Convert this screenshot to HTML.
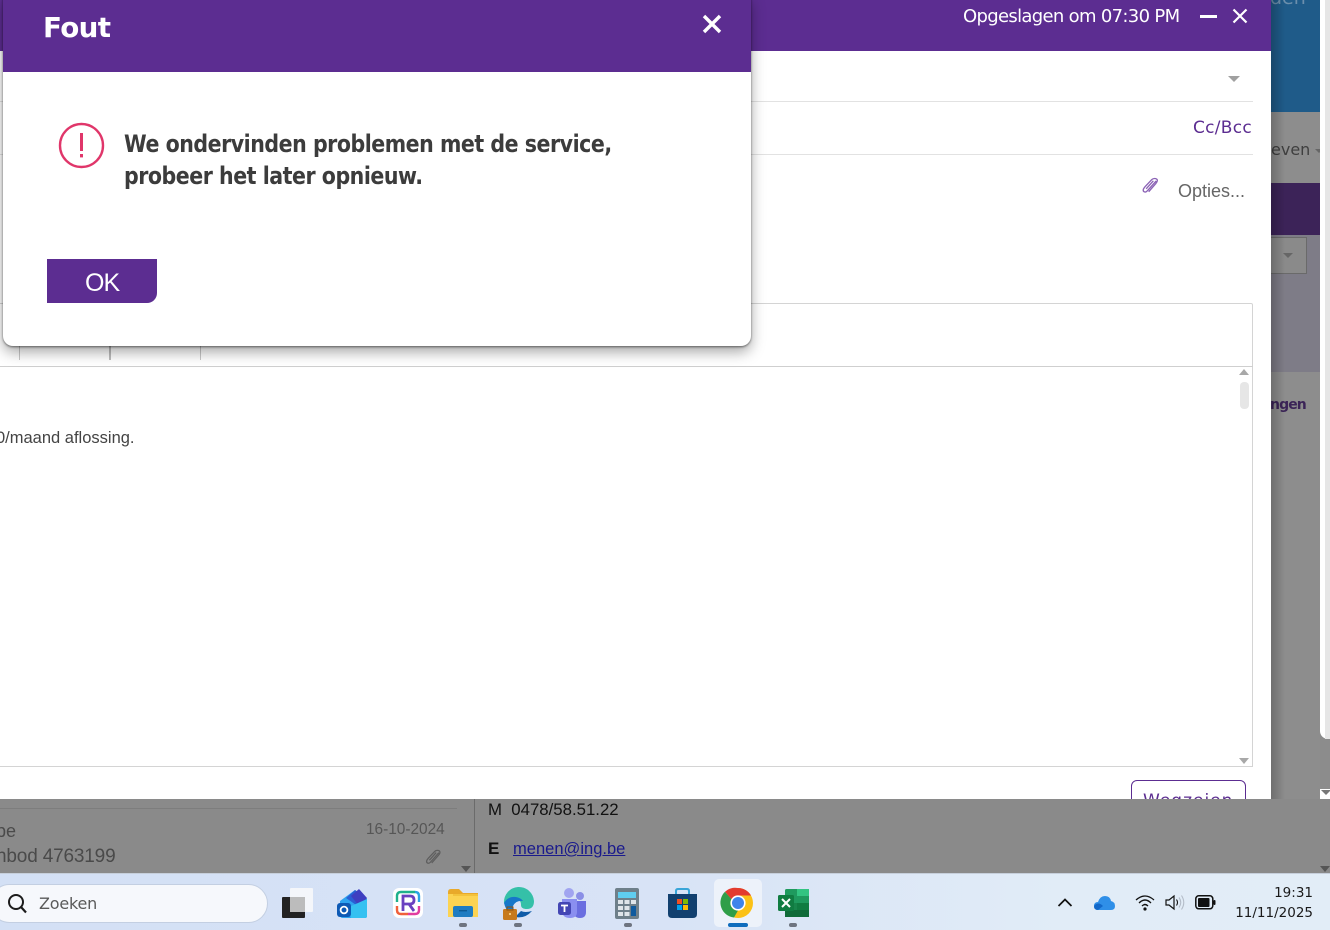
<!DOCTYPE html>
<html><head><meta charset="utf-8"><title>Fout</title>
<style>
html,body{margin:0;padding:0;width:1330px;height:930px;overflow:hidden;background:#8b8b8b;font-family:"Liberation Sans",sans-serif}
.a{position:absolute}
.t{position:absolute;white-space:nowrap}
svg{position:absolute;overflow:visible}
</style></head><body>
<!-- background page -->
<div class="a" style="left:1271px;top:0;width:49px;height:112px;background:#1f5b89"></div>
<div class="t" style="left:1270px;top:-13px;font-size:19px;color:#6c8fac;font-family:'DejaVu Sans',sans-serif">den</div>
<div class="a" style="left:1271px;top:112px;width:49px;height:71px;background:#8d8d8d"></div>
<div class="t" style="left:1271px;top:140px;font-size:16px;color:#3f3f3f;font-family:'DejaVu Sans',sans-serif">even</div>
<div class="a" style="left:1315px;top:149px;border:4px solid transparent;border-top-color:#666"></div>
<div class="a" style="left:1271px;top:183px;width:49px;height:52px;background:#3c2358"></div>
<div class="a" style="left:1271px;top:235px;width:49px;height:137px;background:#7e7c87"></div>
<div class="a" style="left:1271px;top:237px;width:35px;height:35px;background:#8a8a8a;border:1px solid #6a6a6a;border-left:0"></div>
<div class="a" style="left:1283px;top:253px;border:5px solid transparent;border-top-color:#666;border-bottom:0"></div>
<div class="a" style="left:1271px;top:372px;width:49px;height:427px;background:#8d8d8d"></div>
<div class="t" style="left:1270px;top:397px;font-size:14px;font-weight:bold;letter-spacing:-.9px;color:#3b2457;font-family:'DejaVu Sans',sans-serif">ngen</div>
<div class="a" style="left:1320px;top:0;width:10px;height:739px;background:#fff;border-bottom-left-radius:8px"></div>
<div class="a" style="left:1325px;top:0;width:5px;height:739px;background:#e6e6e6"></div>
<div class="a" style="left:1320px;top:739px;width:10px;height:50px;background:#8c8c8c"></div>
<div class="a" style="left:1320px;top:789px;width:10px;height:10px;background:#fff"></div>
<div class="a" style="left:1321px;top:790px;border:5px solid transparent;border-top-color:#777;border-bottom:0"></div>
<div class="a" style="left:1271px;top:0;width:14px;height:799px;background:linear-gradient(90deg,rgba(0,0,0,.22),rgba(0,0,0,0))"></div>

<!-- compose window -->
<div class="a" style="left:0;top:0;width:1271px;height:799px;background:#fff"></div>
<div class="a" style="left:0;top:0;width:1271px;height:51px;background:#5c2d91"></div>
<div class="t" style="left:963px;top:6px;color:#fff;font-family:'DejaVu Sans',sans-serif;font-size:18px;letter-spacing:-.68px">Opgeslagen om 07:30 PM</div>
<div class="a" style="left:1200px;top:15px;width:17px;height:3px;background:#fff"></div>
<svg style="left:1232px;top:8px" width="16" height="16"><path d="M1.5 1.5L14.5 14.5M14.5 1.5L1.5 14.5" stroke="#fff" stroke-width="2.2"/></svg>
<div class="a" style="left:1228px;top:76px;border:6px solid transparent;border-top:6px solid #a0a0a0;border-bottom:0"></div>
<div class="a" style="left:0;top:101px;width:1253px;height:1px;background:#e2e2e2"></div>
<div class="t" style="left:1193px;top:118px;font-size:17px;color:#5c2d91;font-family:'DejaVu Sans',sans-serif;letter-spacing:.28px">Cc/Bcc</div>
<div class="a" style="left:0;top:154px;width:1253px;height:1px;background:#e2e2e2"></div>
<svg style="left:1141px;top:177px" width="18" height="19" viewBox="0 0 16 17"><path d="M13.5 3.5L5.5 12.5C4 14.2 1.6 13.4 2 11.2C2.2 10.3 3 9.4 3.6 8.7L9.6 2.3C11 .9 13.8 1.1 14.4 2.4C15 3.8 14 5 13.2 5.9L6.8 13.2M11 3.4L4.6 10.6" fill="none" stroke="#8b63b5" stroke-width="1.2"/></svg>
<div class="t" style="left:1178px;top:181px;font-size:18px;color:#666;font-family:'Liberation Sans',sans-serif">Opties...</div>
<div class="a" style="left:0;top:303px;width:1252px;height:462px;border:1px solid #d4d4d4;border-left:0;border-radius:0 2px 0 0"></div>
<div class="a" style="left:0;top:366px;width:1253px;height:1px;background:#cfcfcf"></div>
<div class="a" style="left:1239px;top:369px;border:5px solid transparent;border-bottom:6px solid #a8a8a8;border-top:0"></div>
<div class="a" style="left:1240px;top:382px;width:9px;height:27px;background:#e6e6e6;border-radius:4px"></div>
<div class="a" style="left:1239px;top:758px;border:5px solid transparent;border-top:6px solid #a8a8a8;border-bottom:0"></div>
<div class="a" style="left:19px;top:346px;width:1px;height:14px;background:#c8c8c8"></div>
<div class="a" style="left:109px;top:346px;width:2px;height:14px;background:#bcbcbc"></div>
<div class="a" style="left:200px;top:346px;width:1px;height:14px;background:#c8c8c8"></div>
<div class="t" style="left:-4px;top:429px;font-size:16.5px;color:#444">0/maand aflossing.</div>
<div class="a" style="left:1131px;top:780px;width:113px;height:30px;border:1px solid #5c2d91;border-radius:6px;overflow:hidden"></div>
<div class="t" style="left:1143px;top:791px;font-size:17px;color:#5c2d91;letter-spacing:1px;font-family:'DejaVu Sans',sans-serif">Wegzeien</div>

<!-- bottom dimmed band -->
<div class="a" style="left:0;top:799px;width:1330px;height:75px;background:#8a8a8a"></div>
<div class="a" style="left:0;top:808px;width:457px;height:1px;background:#7d7d7d"></div>
<div class="a" style="left:474px;top:799px;width:1px;height:75px;background:#6b6b6b"></div>
<div class="t" style="left:-4px;top:821px;font-size:18px;color:#4a4a4a">pe</div>
<div class="t" style="left:-4px;top:846px;font-size:19px;letter-spacing:-.17px;color:#4a4a4a">nbod 4763199</div>
<div class="t" style="left:366px;top:821px;font-size:15.4px;color:#565656">16-10-2024</div>
<svg style="left:424px;top:849px" width="18" height="18" viewBox="0 0 16 17"><path d="M13.5 3.5L5.5 12.5C4 14.2 1.6 13.4 2 11.2C2.2 10.3 3 9.4 3.6 8.7L9.6 2.3C11 .9 13.8 1.1 14.4 2.4C15 3.8 14 5 13.2 5.9L6.8 13.2M11 3.4L4.6 10.6" fill="none" stroke="#5e5e5e" stroke-width="1.2"/></svg>
<div class="a" style="left:461px;top:866px;border:5px solid transparent;border-top:6px solid #555;border-bottom:0"></div>
<div class="a" style="left:1320px;top:866px;border:5px solid transparent;border-top:6px solid #555;border-bottom:0"></div>
<div class="t" style="left:488px;top:800px;font-size:16.8px;color:#111">M&nbsp; 0478/58.51.22</div>
<div class="t" style="left:488px;top:839px;font-size:17px;font-weight:bold;color:#111">E</div>
<div class="t" style="left:513px;top:839px;font-size:16.55px;color:#1a1a8c;text-decoration:underline">menen@ing.be</div>

<!-- dialog -->
<div class="a" style="left:3px;top:-4px;width:748px;height:350px;background:#fff;border-radius:0 0 10px 10px;box-shadow:0 1px 2px rgba(0,0,0,.5),0 6px 14px rgba(0,0,0,.35);overflow:hidden">
  <div class="a" style="left:0;top:0;width:748px;height:76px;background:#5c2d91"></div>
</div>
<div class="t" style="left:43px;top:11px;font-weight:bold;color:#fff;font-family:'DejaVu Sans',sans-serif;font-size:28px;letter-spacing:-.6px;transform-origin:left;transform:scaleX(.99)">Fout</div>
<svg style="left:702px;top:14px" width="20" height="20"><path d="M2 2L18 18M18 2L2 18" stroke="#fff" stroke-width="3.4"/></svg>
<svg style="left:59px;top:123px" width="45" height="45" viewBox="0 0 45 45"><circle cx="22.5" cy="22.5" r="21.5" fill="none" stroke="#e0366a" stroke-width="2.4"/><path d="M22.5 10V28" stroke="#e0366a" stroke-width="3"/><rect x="21" y="31" width="3" height="3.4" fill="#e0366a"/></svg>
<div class="t" style="left:124px;top:128px;line-height:32px;font-weight:bold;color:#3c3c3c;font-family:'DejaVu Sans',sans-serif;font-size:24px;letter-spacing:-.55px;transform-origin:left top;transform:scaleX(.856)">We ondervinden problemen met de service,<br>probeer het later opnieuw.</div>
<div class="a" style="left:47px;top:259px;width:110px;height:44px;background:#5c2d91;border-bottom-right-radius:10px"></div>
<div class="t" style="left:85px;top:269px;font-size:25px;letter-spacing:-1px;color:#fff">OK</div>

<!-- taskbar -->
<div class="a" style="left:0;top:873px;width:1330px;height:57px;background:linear-gradient(90deg,#d3e0f5 0%,#d8e3f6 50%,#e1ecf7 80%,#e2edf7 100%);border-top:1px solid #c6cfdb;box-sizing:border-box"></div>
<div class="a" style="left:-10px;top:884px;width:276px;height:37px;background:#f6f8fc;border:1px solid #c3cfe2;border-radius:20px"></div>
<svg style="left:7px;top:893px" width="20" height="21"><circle cx="9" cy="9" r="7" fill="none" stroke="#1c1c1c" stroke-width="2"/><path d="M14 14L19 19.5" stroke="#1c1c1c" stroke-width="2.2"/></svg>
<div class="t" style="left:39px;top:894px;color:#5a5a5a;font-family:'DejaVu Sans',sans-serif;font-size:16px;letter-spacing:-.2px">Zoeken</div>

<!-- task view -->
<svg style="left:282px;top:888px" width="32" height="32"><rect x="0" y="9" width="23" height="21" rx="1" fill="#222"/><rect x="8" y="0" width="23" height="24" rx="1" fill="#f4f6fa"/><rect x="8" y="9" width="15" height="15" fill="#bcbcbc"/></svg>
<!-- outlook -->
<svg style="left:337px;top:888px" width="32" height="32"><path d="M3 13L18 2L30 11V28Q30 30 28 30H6Q3 30 3 27Z" fill="#2fa4f0"/><path d="M18 2L30 11L22 19L9 10Z" fill="#2a5fd4"/><path d="M22 1L30 10L22 18L14 8Z" fill="#3f3fc0"/><path d="M12 19L30 11V28Q30 30 28 30H14Z" fill="#35c1f1"/><rect x="0" y="15" width="14" height="14" rx="3" fill="#0e5ab5"/><circle cx="7" cy="22" r="3.4" fill="none" stroke="#fff" stroke-width="1.8"/></svg>
<!-- R app -->
<svg style="left:393px;top:888px" width="30" height="30"><rect x="0" y="0" width="30" height="30" rx="6" fill="#fff"/><path d="M4 14V8Q4 4 8 4H22" fill="none" stroke="#1fb18c" stroke-width="2.4"/><path d="M22 4Q26 4 26 8V14" fill="none" stroke="#2aa4e4" stroke-width="2.4"/><path d="M4 18V22Q4 26 8 26H15" fill="none" stroke="#f0603c" stroke-width="2.4"/><path d="M26 18V22Q26 26 22 26H15" fill="none" stroke="#e23da0" stroke-width="2.4"/><path d="M10 23V8H17Q21 8 21 12Q21 16 17 16H10M16 16L21 23" fill="none" stroke="#6a40c0" stroke-width="2.8"/></svg>
<!-- folder -->
<svg style="left:448px;top:889px" width="30" height="28"><path d="M0 3Q0 0 3 0H11L15 4H30V28H0Z" fill="#e9a92a"/><rect x="0" y="5" width="30" height="23" fill="#fcd352"/><rect x="5" y="5" width="25" height="2" fill="#f3c23c"/><rect x="5" y="17" width="20" height="11" rx="2" fill="#1e7cc2"/><rect x="11" y="21" width="8" height="1.4" fill="#0d5a94"/></svg>
<div class="a" style="left:459px;top:923px;width:8px;height:4px;background:#6e7480;border-radius:2px"></div>
<!-- edge -->
<svg style="left:503px;top:887px" width="31" height="33"><path d="M1 16A15 15 0 0 1 31 14Q31 22 24 22Q18 22 18 18Q18 12 12 11Q5 11 1 16Z" fill="#35c0a8"/><path d="M1 16Q5 9 13 10Q18 11 20 14Q13 13 10 19Q8 25 14 30Q4 28 1 16Z" fill="#1677c9"/><path d="M12 30Q22 32 29 24Q22 26 18 24Z" fill="#0f5ba8"/><rect x="0" y="22" width="14" height="11" rx="1.5" fill="#c77a1c"/><rect x="4" y="20" width="6" height="3" fill="none" stroke="#8a5212" stroke-width="1"/><rect x="6" y="26" width="2" height="2" fill="#f3c97a"/></svg>
<div class="a" style="left:514px;top:923px;width:8px;height:4px;background:#6e7480;border-radius:2px"></div>
<!-- teams -->
<svg style="left:558px;top:888px" width="29" height="30"><circle cx="11" cy="5" r="5" fill="#a0a4f0"/><circle cx="22" cy="8" r="4" fill="#8a8fe6"/><path d="M17 13H28V24Q28 30 22 30Q18 30 16 27Z" fill="#6a6ee0"/><path d="M4 11H19V24Q19 30 12 30Q5 30 4 24Z" fill="#8a8ff0"/><rect x="0" y="14" width="13" height="13" rx="2.5" fill="#4346b4"/><path d="M3 17.5H10M6.5 17.5V24" stroke="#fff" stroke-width="1.8"/></svg>
<!-- calculator -->
<svg style="left:615px;top:888px" width="24" height="31"><rect width="24" height="31" rx="2" fill="#6e7f8a"/><rect x="3" y="4" width="18" height="6" fill="#5fcdf0"/><g fill="#dfe5ea"><rect x="3" y="12" width="5" height="4"/><rect x="9.5" y="12" width="5" height="4"/><rect x="16" y="12" width="5" height="4"/><rect x="3" y="18" width="5" height="4"/><rect x="9.5" y="18" width="5" height="4"/><rect x="3" y="24" width="5" height="4"/><rect x="9.5" y="24" width="5" height="4"/></g><rect x="16" y="18" width="5" height="10" fill="#0f5a9e"/></svg>
<div class="a" style="left:624px;top:923px;width:8px;height:4px;background:#6e7480;border-radius:2px"></div>
<!-- store -->
<svg style="left:668px;top:888px" width="29" height="30"><path d="M8 6V3Q8 1 10 1H19Q21 1 21 3V6" fill="none" stroke="#39a5d8" stroke-width="2"/><path d="M0 6H29V26Q29 30 25 30H4Q0 30 0 26Z" fill="#12406f"/><rect x="9" y="11" width="5" height="5" fill="#f25022"/><rect x="15" y="11" width="5" height="5" fill="#7fba00"/><rect x="9" y="17" width="5" height="5" fill="#00a4ef"/><rect x="15" y="17" width="5" height="5" fill="#ffb900"/></svg>
<!-- chrome -->
<div class="a" style="left:714px;top:879px;width:48px;height:48px;background:#edf2fa;border-radius:5px"></div>
<svg style="left:723px;top:888px" width="30" height="30" viewBox="0 0 30 30"><circle cx="15" cy="15" r="15" fill="#fbc116"/><path d="M15 0A15 15 0 0 1 28 7.5H15A7.5 7.5 0 0 0 8.5 11.2L2 3.8A15 15 0 0 1 15 0Z" fill="#e33b2e"/><path d="M2 3.8L8.5 11.2A7.5 7.5 0 0 0 15 22.5L11 29.5A15 15 0 0 1 2 3.8Z" fill="#2f9e48"/><circle cx="15" cy="15" r="7.6" fill="#fff"/><circle cx="15" cy="15" r="6" fill="#3f84ea"/></svg>
<div class="a" style="left:728px;top:923px;width:20px;height:4px;background:#0f6cbd;border-radius:2px"></div>
<!-- excel -->
<svg style="left:778px;top:889px" width="31" height="28"><rect x="7" y="0" width="24" height="28" rx="1.5" fill="#1f9a5e"/><rect x="19" y="0" width="12" height="7" fill="#33c481"/><rect x="19" y="14" width="12" height="7" fill="#107c41"/><rect x="7" y="21" width="24" height="7" fill="#0f6a38"/><rect x="7" y="14" width="12" height="7" fill="#18854b"/><rect x="0" y="6" width="16" height="16" rx="1.5" fill="#107c41"/><path d="M4 10L12 18M12 10L4 18" stroke="#fff" stroke-width="2"/></svg>
<div class="a" style="left:789px;top:923px;width:8px;height:4px;background:#6e7480;border-radius:2px"></div>

<!-- tray -->
<svg style="left:1057px;top:897px" width="16" height="11"><path d="M1.5 9L8 2.5L14.5 9" fill="none" stroke="#111" stroke-width="1.7"/></svg>
<svg style="left:1094px;top:894px" width="22" height="17"><path d="M4 16Q0 16 0 12Q0 8 4 8Q6 2 11 2Q16 2 17 7Q21 8 21 12Q21 16 17 16Z" fill="#2f8fe8"/><path d="M4 16Q0 16 0 12Q4 7 9 12Z" fill="#1268c9"/></svg>
<svg style="left:1135px;top:894px" width="20" height="17"><g fill="none" stroke="#111" stroke-width="1.3"><path d="M1 6Q10 -2 19 6"/><path d="M4 9Q10 3 16 9"/><path d="M7 12Q10 9 13 12"/></g><circle cx="10" cy="15" r="1.6" fill="#111"/></svg>
<svg style="left:1165px;top:894px" width="20" height="17"><path d="M1 6H4L9 2V15L4 11H1Z" fill="none" stroke="#111" stroke-width="1.2"/><path d="M11.5 5.5Q13.5 8.5 11.5 11.5" fill="none" stroke="#111" stroke-width="1.1"/><path d="M14 3.5Q17.5 8.5 14 13.5M16.5 1.5Q21 8.5 16.5 15.5" fill="none" stroke="#b4bcc8" stroke-width="1.1"/></svg>
<svg style="left:1195px;top:895px" width="21" height="15"><rect x=".8" y=".8" width="17" height="13" rx="3" fill="none" stroke="#111" stroke-width="1.5"/><rect x="3" y="3" width="11.5" height="9" rx="1" fill="#111"/><rect x="18.5" y="5" width="2" height="5" rx="1" fill="#111"/></svg>
<div class="t" style="right:17px;top:883px;color:#1a1a1a;font-family:'DejaVu Sans',sans-serif;font-size:13.5px;text-align:right;line-height:20px">19:31<br>11/11/2025</div>
</body></html>
